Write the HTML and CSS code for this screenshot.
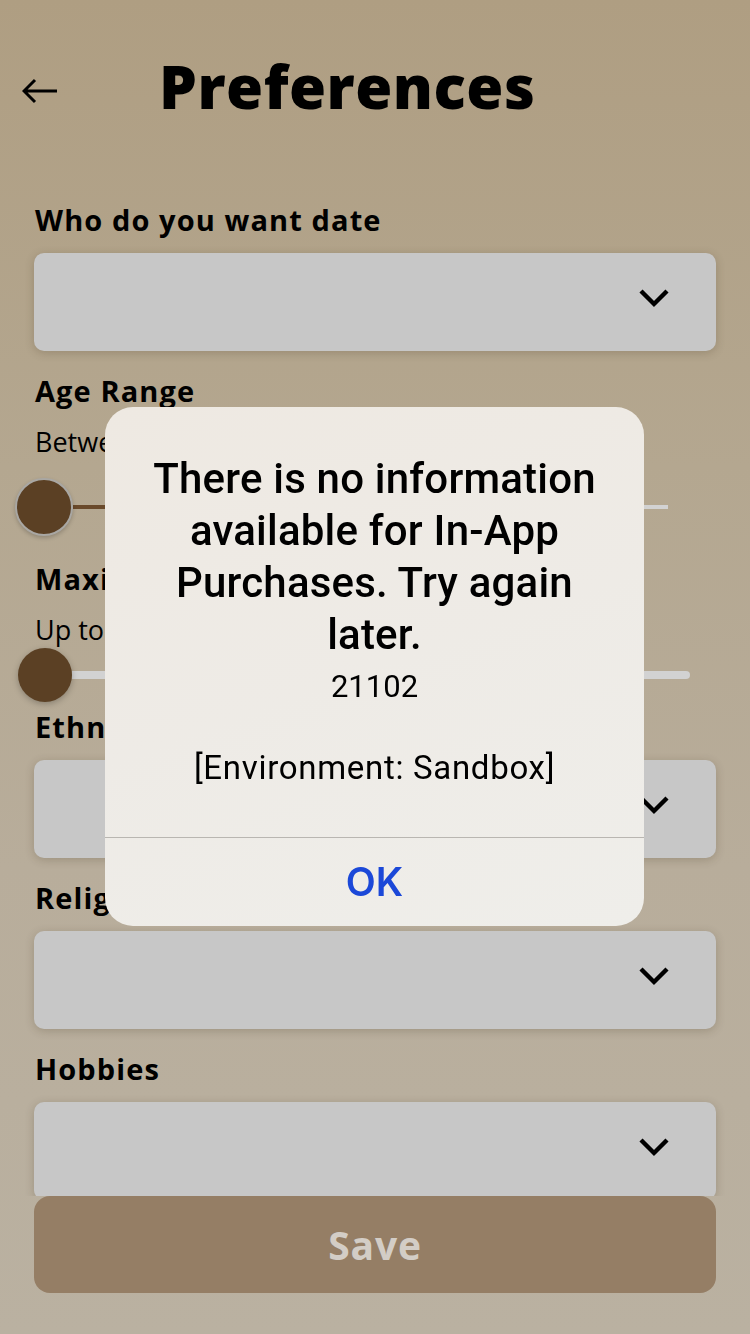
FILE: index.html
```html
<!DOCTYPE html>
<html lang="en">
<head>
<meta charset="utf-8">
<title>Preferences</title>
<link rel="stylesheet" href="styles.css">
</head>
<body>
<div class="screen">
  <header class="header">
    <svg class="back" width="36" height="26" viewBox="0 0 36 26" aria-hidden="true">
      <path d="M35 13H3M13 2L2 13L13 24" fill="none" stroke="#000" stroke-width="3" stroke-linecap="butt" stroke-linejoin="miter"/>
    </svg>
    <h1 class="title">Preferences</h1>
  </header>

  <main class="scroll">
    <div class="label">Who do you want date</div>
    <div class="select"><svg class="chev" width="32" height="20" viewBox="0 0 32 20" aria-hidden="true"><path d="M3 3L16 16L29 3" fill="none" stroke="#000" stroke-width="4.4"/></svg></div>

    <div class="label gap-top">Age Range</div>
    <div class="sub">Between 18 and 80</div>
    <div class="slider s1">
      <span class="thumb thumb-ring"></span>
      <span class="track-fill"></span>
      <span class="track-rest thin"></span>
    </div>

    <div class="label s1-after">Maximum Distance</div>
    <div class="sub">Up to 1 miles</div>
    <div class="slider s2">
      <span class="thumb thumb-plain"></span>
      <span class="track-rest thick"></span>
    </div>

    <div class="label s2-after">Ethnicity</div>
    <div class="select"><svg class="chev" width="32" height="20" viewBox="0 0 32 20" aria-hidden="true"><path d="M3 3L16 16L29 3" fill="none" stroke="#000" stroke-width="4.4"/></svg></div>

    <div class="label gap-top">Religion</div>
    <div class="select"><svg class="chev" width="32" height="20" viewBox="0 0 32 20" aria-hidden="true"><path d="M3 3L16 16L29 3" fill="none" stroke="#000" stroke-width="4.4"/></svg></div>

    <div class="label gap-top">Hobbies</div>
    <div class="select"><svg class="chev" width="32" height="20" viewBox="0 0 32 20" aria-hidden="true"><path d="M3 3L16 16L29 3" fill="none" stroke="#000" stroke-width="4.4"/></svg></div>
  </main>

  <footer class="footer">
    <button class="save">Save</button>
  </footer>
</div>

<div class="alert" role="alertdialog">
  <div class="alert-body">
    <div class="alert-title">There is no information available for In-App Purchases. Try again later.</div>
    <div class="alert-msg">21102</div>
    <div class="alert-msg env">[Environment: Sandbox]</div>
  </div>
  <div class="alert-action">OK</div>
</div>
</body>
</html>
```

FILE: styles.css
```css
* { box-sizing: border-box; }
html, body { margin: 0; padding: 0; }
body {
  width: 750px;
  height: 1334px;
  overflow: hidden;
  background: linear-gradient(180deg, #af9e82 0%, #b4a790 35%, #b8ad9b 65%, #bab1a1 100%);
  font-family: "Open Sans", "Liberation Sans", sans-serif;
  color: #000;
}
.screen {
  height: 1334px;
  display: flex;
  flex-direction: column;
}
.header {
  height: 130px;
  padding: 50px 0 0 22px;
  display: flex;
  align-items: center;
}
.header .back { flex: none; margin-top: 2px; }
.title {
  margin: -9px 0 0 101px;
  font-family: "Open Sans", sans-serif;
  font-weight: 800;
  font-size: 60px;
  line-height: 80px;
  letter-spacing: 0.5px;
  height: 80px;
}
.scroll {
  flex: 1;
  overflow: hidden;
  padding: 73px 34px 0 34px;
}
.label {
  font-weight: 700;
  font-size: 29px;
  line-height: 34px;
  height: 34px;
  padding-left: 1px;
  white-space: nowrap;
  letter-spacing: 1.1px;
}
.gap-top { margin-top: 23px; }
.sub {
  margin-top: 17px;
  font-weight: 400;
  font-size: 27px;
  line-height: 34px;
  height: 34px;
  padding-left: 1px;
  white-space: nowrap;
}
.select {
  margin-top: 16px;
  height: 98px;
  border-radius: 10px;
  background: #c7c7c7;
  box-shadow: 0 2px 10px rgba(60, 45, 25, 0.22);
  display: flex;
  align-items: center;
  justify-content: flex-end;
  padding: 0 46px 8px 0;
}
.chev { display: block; }
.slider {
  display: flex;
  align-items: center;
}
.s1 { margin: 19px 0 0 -19px; height: 58px; width: 653px; }
.s2 { margin: 1px 0 0 -16px; height: 54px; width: 672px; }
.thumb {
  flex: none;
  border-radius: 50%;
  background: #5b4024;
  position: relative;
  z-index: 1;
}
.thumb-ring {
  width: 58px; height: 58px;
  border: 2px solid #a9a7a3;
  box-shadow: 0 2px 4px rgba(0,0,0,0.2);
}
.thumb-plain {
  width: 54px; height: 54px;
  box-shadow: 0 2px 6px rgba(0,0,0,0.25);
}
.track-fill {
  width: 300px;
  height: 4px;
  background: #6a4a2b;
}
.track-rest {
  flex: 1;
  background: #d2d2d2;
}
.thin { height: 4px; }
.thick { height: 8px; border-radius: 0 4px 4px 0; }
.s1-after { margin-top: 26px; }
.s2-after { margin-top: 8px; }

.footer {
  padding: 0 34px 41px 34px;
}
.save {
  display: block;
  width: 100%;
  height: 97px;
  border: 0;
  border-radius: 16px;
  background: #957e65;
  color: #d3cdc6;
  font-family: "Open Sans", sans-serif;
  font-weight: 700;
  font-size: 39px;
  letter-spacing: 0.8px;
}

.alert {
  position: fixed;
  left: 105px;
  top: 407px;
  width: 539px;
  height: 519px;
  border-radius: 28px;
  background: linear-gradient(160deg, #eee9e2 0%, #eeebe6 50%, #efeeea 100%);
  display: flex;
  flex-direction: column;
  font-family: "Roboto", "Inter", sans-serif;
  text-align: center;
  overflow: hidden;
}
.alert-body {
  flex: 1;
  padding: 46px 40px 0 40px;
  border-bottom: 1.5px solid #b9b6b1;
}
.alert-title {
  font-weight: 500;
  font-size: 42px;
  line-height: 52px;
  letter-spacing: 0.2px;
}
.alert-msg {
  font-weight: 400;
  font-size: 31px;
  line-height: 40px;
  margin-top: 6px;
}
.alert-msg.env {
  margin-top: 41px;
  font-size: 33px;
  letter-spacing: 0.7px;
}
.alert-action {
  height: 88px;
  line-height: 88px;
  color: #1b48d8;
  font-family: "Inter", "Roboto", sans-serif;
  font-weight: 600;
  font-size: 39px;
}
```
